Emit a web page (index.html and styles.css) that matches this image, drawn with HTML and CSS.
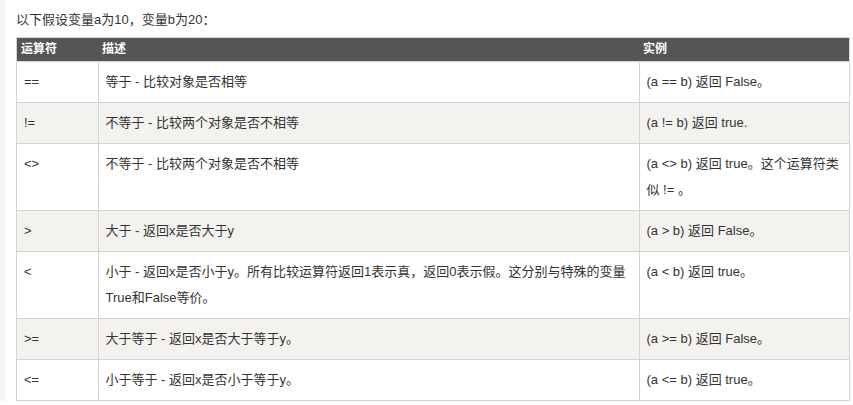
FILE: index.html
```html
<!DOCTYPE html>
<html lang="zh-CN">
<head>
    <meta charset="UTF-8">
    <meta name="viewport" content="width=device-width, initial-scale=1.0">
    <title>比较运算符</title>
    <link rel="stylesheet" href="styles.css">
</head>
<body>
    <div class="content">
        <p class="intro">以下假设变量a为10，变量b为20：</p>
        <table class="reference">
            <thead>
                <tr>
                    <th class="col-op">运算符</th>
                    <th class="col-desc">描述</th>
                    <th class="col-ex">实例</th>
                </tr>
            </thead>
            <tbody>
                <tr>
                    <td>==</td>
                    <td>等于 - 比较对象是否相等</td>
                    <td>(a == b) 返回 False。</td>
                </tr>
                <tr>
                    <td>!=</td>
                    <td>不等于 - 比较两个对象是否不相等</td>
                    <td>(a != b) 返回 true.</td>
                </tr>
                <tr>
                    <td>&lt;&gt;</td>
                    <td>不等于 - 比较两个对象是否不相等</td>
                    <td>(a &lt;&gt; b) 返回 true。这个运算符类似 != 。</td>
                </tr>
                <tr>
                    <td>&gt;</td>
                    <td>大于 - 返回x是否大于y</td>
                    <td>(a &gt; b) 返回 False。</td>
                </tr>
                <tr>
                    <td>&lt;</td>
                    <td>小于 - 返回x是否小于y。所有比较运算符返回1表示真，返回0表示假。这分别与特殊的变量True和False等价。</td>
                    <td>(a &lt; b) 返回 true。</td>
                </tr>
                <tr>
                    <td>&gt;=</td>
                    <td>大于等于 - 返回x是否大于等于y。</td>
                    <td>(a &gt;= b) 返回 False。</td>
                </tr>
                <tr>
                    <td>&lt;=</td>
                    <td>小于等于 - 返回x是否小于等于y。</td>
                    <td>(a &lt;= b) 返回 true。</td>
                </tr>
            </tbody>
        </table>
    </div>
</body>
</html>
```

FILE: styles.css
```css
body {
    margin: 0;
    padding: 0;
    background: #fff;
    border-left: 5px solid #f6f6f6;
    font-family: "Liberation Sans", "Noto Sans CJK SC", sans-serif;
    font-size: 13px;
    color: #333;
}
.content {
    padding: 10px 0 0 11px;
}
.intro {
    margin: 0 0 7px;
    line-height: 20px;
}
.reference {
    width: 834px;
    border-collapse: collapse;
    table-layout: fixed;
    border: 1px solid #d4d4d4;
}
.reference th {
    background: #555;
    color: #fff;
    font-size: 12px;
    font-weight: bold;
    text-align: left;
    height: 23px;
    line-height: 23px;
    padding: 0 4px;
    border: none;
}
.col-op {
    width: 73px;
}
.col-desc {
    width: 533px;
}
.reference td {
    padding: 7px;
    line-height: 26px;
    vertical-align: top;
    border: 1px solid #d4d4d4;
}
.reference tbody tr:nth-child(even) td {
    background: #f3f2ef;
}
```
